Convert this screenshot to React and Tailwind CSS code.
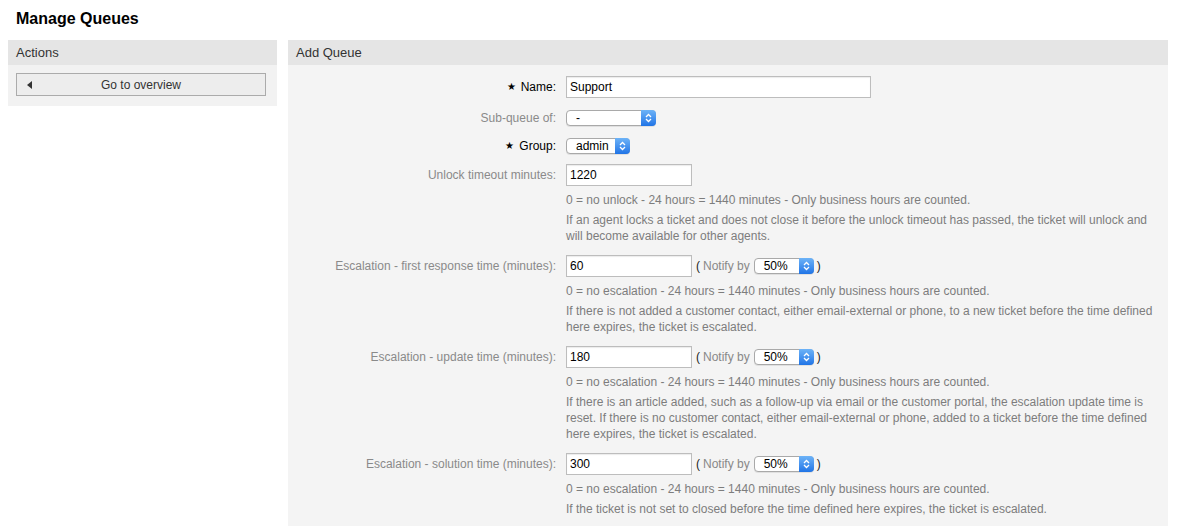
import React from 'react';

const Select = ({ value, width }) => (
  <div
    className="relative flex h-[16px] items-center rounded-[4px] border border-[#a9a9a9] bg-white pl-[9px] text-[12px] leading-none text-black shadow-[0_1px_0_rgba(0,0,0,0.08)]"
    style={{ width }}
  >
    <span>{value}</span>
    <div className="absolute -top-px -right-px -bottom-px flex w-[15px] items-center justify-center rounded-r-[4px] bg-gradient-to-b from-[#6db3f7] to-[#1f74e6]">
      <svg width="7" height="10" viewBox="0 0 7 10" fill="none" stroke="white" strokeWidth="1.3">
        <path d="M1 4 L3.5 1.5 L6 4" />
        <path d="M1 6 L3.5 8.5 L6 6" />
      </svg>
    </div>
  </div>
);

const Input = ({ value, width = 'w-[126px]' }) => (
  <div className={`${width} flex h-[22px] items-center border border-[#bdbdbd] bg-white pl-[3px] text-[12px] text-black shadow-[inset_0_1px_1px_rgba(0,0,0,0.08)]`}>
    {value}
  </div>
);

const Notify = () => (
  <div className="ml-[4px] flex items-center gap-[3px] text-[12px]">
    <span className="text-[#222]">(</span>
    <span className="text-[#888]">Notify by</span>
    <span className="ml-[1px]"><Select value="50%" width="60px" /></span>
    <span className="text-[#222]">)</span>
  </div>
);

const Row = ({ label, required, className = '', children }) => (
  <div className={`grid grid-cols-[268px_1fr] gap-x-[10px] ${className}`}>
    <div className={`flex items-center justify-end text-[12px] leading-[16px] ${required ? 'text-black' : 'text-[#8a8a8a]'}`}>
      {required && <span className="mr-[5px] text-[10px]">★</span>}
      {label}
    </div>
    <div className="flex items-center">{children}</div>
  </div>
);

const Hints = ({ lines }) => (
  <div className="grid grid-cols-[268px_1fr] gap-x-[10px] pt-[6px]">
    <div />
    <div className="flex flex-col gap-[4px] pr-[6px] text-[12px] leading-[16px] text-[#7d7d7d]">
      {lines.map((l, i) => (
        <p key={i}>{l}</p>
      ))}
    </div>
  </div>
);

const escHint = '0 = no escalation - 24 hours = 1440 minutes - Only business hours are counted.';

export default function App() {
  return (
    <div className="min-h-[526px] bg-white font-['Liberation_Sans',Arial,sans-serif] text-[#333]">
      <h1 className="px-4 pt-[9px] text-[16px] font-bold leading-[20px] text-black">Manage Queues</h1>
      <div className="mt-[11px] flex gap-[11px] px-2">
        <aside className="w-[269px] self-start">
          <div className="flex h-[25px] items-center bg-[#e5e5e5] px-2 pt-px text-[13px] text-[#333]">Actions</div>
          <div className="bg-[#f2f2f2] px-2 pt-[8px] pb-[10px]">
            <button className="relative flex h-[23px] w-[250px] items-center justify-center border border-[#ababab] bg-[#ededed] text-[12px] text-[#333]">
              <span className="absolute left-[10px] top-1/2 h-0 w-0 -translate-y-1/2 border-y-[4px] border-r-[5px] border-y-transparent border-r-[#333]" />
              Go to overview
            </button>
          </div>
        </aside>
        <main className="w-[880px]">
          <div className="flex h-[25px] items-center bg-[#e5e5e5] px-2 pt-px text-[13px] text-[#333]">Add Queue</div>
          <div className="bg-[#f4f4f4] pt-[11px] pb-[20px]">
            <Row label="Name:" required>
              <Input value="Support" width="w-[305px]" />
            </Row>
            <Row label="Sub-queue of:" className="mt-[12px]">
              <Select value="-" width="90px" />
            </Row>
            <Row label="Group:" required className="mt-[12px]">
              <Select value="admin" width="64px" />
            </Row>
            <Row label="Unlock timeout minutes:" className="mt-[10px]">
              <Input value="1220" />
            </Row>
            <Hints
              lines={[
                '0 = no unlock - 24 hours = 1440 minutes - Only business hours are counted.',
                'If an agent locks a ticket and does not close it before the unlock timeout has passed, the ticket will unlock and will become available for other agents.',
              ]}
            />
            <Row label="Escalation - first response time (minutes):" className="mt-[11px]">
              <Input value="60" />
              <Notify />
            </Row>
            <Hints
              lines={[
                escHint,
                'If there is not added a customer contact, either email-external or phone, to a new ticket before the time defined here expires, the ticket is escalated.',
              ]}
            />
            <Row label="Escalation - update time (minutes):" className="mt-[11px]">
              <Input value="180" />
              <Notify />
            </Row>
            <Hints
              lines={[
                escHint,
                'If there is an article added, such as a follow-up via email or the customer portal, the escalation update time is reset. If there is no customer contact, either email-external or phone, added to a ticket before the time defined here expires, the ticket is escalated.',
              ]}
            />
            <Row label="Escalation - solution time (minutes):" className="mt-[11px]">
              <Input value="300" />
              <Notify />
            </Row>
            <Hints
              lines={[
                escHint,
                'If the ticket is not set to closed before the time defined here expires, the ticket is escalated.',
              ]}
            />
          </div>
        </main>
      </div>
    </div>
  );
}
